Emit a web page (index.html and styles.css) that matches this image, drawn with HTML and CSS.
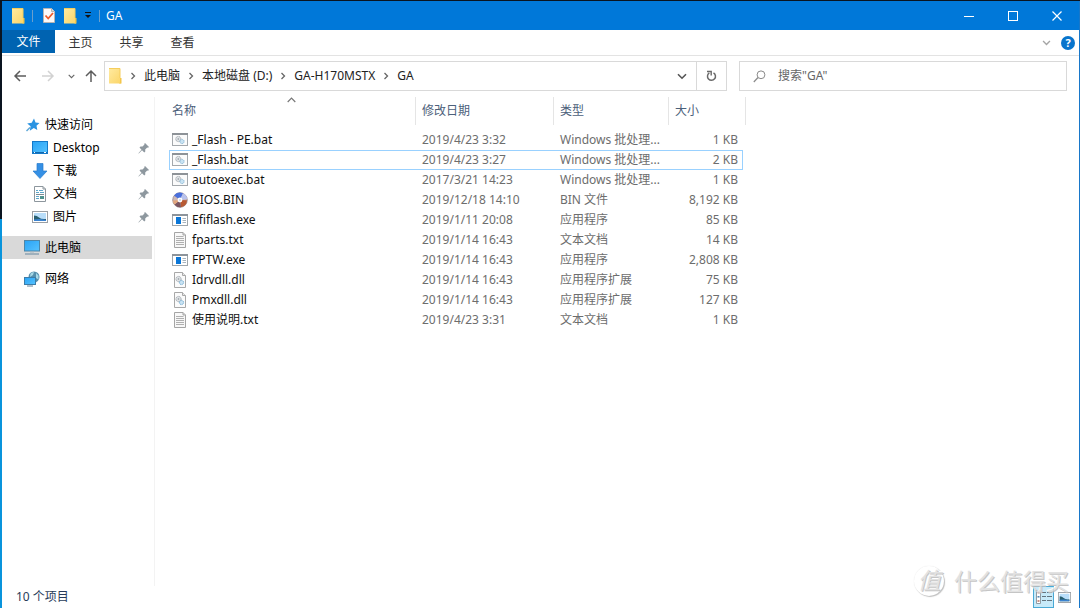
FILE: index.html
```html
<!DOCTYPE html>
<html lang="zh-CN">
<head>
<meta charset="utf-8">
<title>GA</title>
<link rel="stylesheet" href="styles.css">
</head>
<body>
<svg class="defs" aria-hidden="true">
  <linearGradient id="gold" x1="0" y1="0" x2="1" y2="1"><stop offset="0" stop-color="#ffeaa0"/><stop offset="1" stop-color="#fbd567"/></linearGradient>
  <linearGradient id="sky" x1="0" y1="0" x2="1" y2="1"><stop offset="0" stop-color="#29a3f5"/><stop offset="1" stop-color="#56c3ff"/></linearGradient>
  <symbol id="folder" viewBox="0 0 14 16"><path d="M1 .5h11v11.5h1v3.5H1z" fill="url(#gold)"/><path d="M1 15.5h10l1-1V10h1.5v5.5z" fill="#f3c64b"/><path d="M1 .5h11V10" fill="none" stroke="#f5cd5c"/></symbol>
  <symbol id="chev-r" viewBox="0 0 6 8"><path d="M1.500 1l3 3-3 3" fill="none" stroke="#666" stroke-width="1.300"/></symbol>
  <symbol id="chev-d" viewBox="0 0 10 7"><path d="M1 1.200l4 4 4-4" fill="none" stroke="currentColor" stroke-width="1.600"/></symbol>
  <symbol id="pin" viewBox="0 0 12 12"><path d="M7 1l4 4-1 .8-.8-.2-2 2 .1 2-1 1L4 8.300.8 11.500l-.4-.3L3.500 7.800 1.500 5.500l1-1 2 .1 2-2L6.200 2z" fill="#8e989f"/></symbol>
  <symbol id="bat" viewBox="0 0 16 14"><rect x=".5" y=".5" width="15" height="12" fill="#fbfbfb" stroke="#a4a8ac"/><path d="M0 1h16" stroke="#8d9297" stroke-width="2"/><circle cx="6.300" cy="6" r="2.600" fill="#dfe3e6" stroke="#a1a7ad" stroke-dasharray="1.300 .5"/><circle cx="6.300" cy="6" r=".8" fill="#8c949b"/><circle cx="10" cy="8.500" r="2.100" fill="#c9e3f3" stroke="#87b8d6" stroke-dasharray="1.200 .5"/></symbol>
  <symbol id="exe" viewBox="0 0 16 14"><rect x=".5" y="1.500" width="15" height="11" fill="#fff" stroke="#a0a6ab"/><path d="M0 2h16" stroke="#8d949b" stroke-width="2"/><rect x="4" y="4" width="5" height="7" fill="#0a76d8"/><path d="M10.500 5.500H14M10.500 7.500H14M10.500 9.500H14" stroke="#a8b4bf"/></symbol>
  <symbol id="txt" viewBox="0 0 14 16"><path d="M1.500.5H10L12.500 3v12.500h-11z" fill="#f8f8f8" stroke="#a5a5a5"/><path d="M10 .5V3h2.500" fill="#ddd" stroke="#a5a5a5"/><path d="M3 4.500h7.500M3 6.500h8M3 8.500h8M3 10.500h8M3 12.500h8" stroke="#b0b0b0"/></symbol>
  <symbol id="dll" viewBox="0 0 14 16"><path d="M1.500.5H9.500L12.500 3.500v12h-11z" fill="#fbfbfb" stroke="#a8a8a8"/><path d="M9.500.5v3h3" fill="#e8e8e8" stroke="#a8a8a8"/><circle cx="5.500" cy="7" r="2.600" fill="#dfe3e6" stroke="#a1a7ad" stroke-dasharray="1.300 .5"/><circle cx="5.500" cy="7" r=".8" fill="#8c949b"/><circle cx="8.500" cy="10.500" r="2.100" fill="#c9e3f3" stroke="#72acd2" stroke-dasharray="1.200 .5"/></symbol>
  <symbol id="disc" viewBox="0 0 16 16"><circle cx="8" cy="8" r="7.300" fill="#cdb8b8" stroke="#8b7b80" stroke-width=".7"/><path d="M8 8L2 3.500A7.300 7.300 0 0 1 11 1.300z" fill="#4a70dc"/><path d="M8 8l3-6.700A7.300 7.300 0 0 1 15.200 7z" fill="#b9c3ee"/><path d="M8 8l7 .3A7.300 7.300 0 0 1 9 15.200z" fill="#b85a34"/><path d="M8 8l1 7.200A7.300 7.300 0 0 1 2.500 12.500z" fill="#7a5560"/><path d="M8 8l-5.500 4.500A7.300 7.300 0 0 1 .8 8.500z" fill="#e3a77d"/><circle cx="8" cy="8" r="2.400" fill="#fff"/><circle cx="8" cy="8" r="1.100" fill="#cfd6ea"/></symbol>
  <symbol id="picture" viewBox="0 0 16 12"><rect x=".5" y=".5" width="15" height="11" fill="#fff" stroke="#9a9fa4"/><path d="M2 2h12v8H2z" fill="#b9defa"/><path d="M2 4.500q3 0 5 2t7 1.500v2H2z" fill="#285f70"/><path d="M2 8.500q6-1 12 .5v1H2z" fill="#3b83d0"/></symbol>
</svg>
<div class="window">
  <header class="titlebar">
    <svg width="14" height="16"><use href="#folder"/></svg>
    <span class="bar"></span>
    <button class="quick" aria-label="属性"><svg width="12" height="15" viewBox="0 0 12 15"><path d="M.5.5h8l3 3v11H.5z" fill="#fbf9f8" stroke="#b7b4b4"/><path d="M8.500.5v3h3" fill="#ddd" stroke="#b7b4b4"/><path d="M2.500 7.500l2.700 3L10 5" fill="none" stroke="#ed5a2a" stroke-width="1.800"/></svg></button>
    <button class="quick" aria-label="新建文件夹"><svg width="14" height="16"><use href="#folder"/></svg></button>
    <button class="quick customize" aria-label="自定义快速访问工具栏"><svg width="8" height="7" viewBox="0 0 8 7"><path d="M1 .5h6" stroke="#111"/><path d="M1 3h6L4 6z" fill="#111"/></svg></button>
    <span class="bar"></span>
    <h1 class="title">GA</h1>
    <div class="controls">
      <button aria-label="最小化"><svg width="10" height="10"><path d="M0 5.500h10" stroke="#fff"/></svg></button>
      <button aria-label="最大化"><svg width="10" height="10"><rect x=".5" y=".5" width="9" height="9" fill="none" stroke="#fff"/></svg></button>
      <button aria-label="关闭"><svg width="10" height="10"><path d="M.5.5l9 9M9.500.5l-9 9" stroke="#fff" stroke-width="1.200"/></svg></button>
    </div>
  </header>
  <nav class="ribbon">
    <button class="tab file">文件</button>
    <button class="tab">主页</button>
    <button class="tab">共享</button>
    <button class="tab">查看</button>
    <div class="ribbon-end">
      <button class="plain faint" aria-label="展开功能区"><svg width="9" height="6"><use href="#chev-d"/></svg></button>
      <button class="help" aria-label="帮助">?</button>
    </div>
  </nav>
  <div class="navrow">
    <div class="arrows">
      <button class="plain" aria-label="后退"><svg width="12" height="12" viewBox="0 0 12 12"><path d="M12 6H1.500M6 1L1 6l5 5" fill="none" stroke="#5c5c5c" stroke-width="1.500"/></svg></button>
      <button class="plain" aria-label="前进"><svg width="12" height="12" viewBox="0 0 12 12"><path d="M0 6h10.500M6 1l5 5-5 5" fill="none" stroke="#d2d2d2" stroke-width="1.500"/></svg></button>
      <button class="plain recent" aria-label="最近位置"><svg width="7" height="5"><use href="#chev-d"/></svg></button>
      <button class="plain" aria-label="上移"><svg width="12" height="12" viewBox="0 0 12 12"><path d="M6 12V1.500M1 6l5-5 5 5" fill="none" stroke="#5c5c5c" stroke-width="1.500"/></svg></button>
    </div>
    <div class="address">
      <svg width="14" height="16"><use href="#folder"/></svg>
      <svg class="sep" width="6" height="8"><use href="#chev-r"/></svg>
      <a href="#">此电脑</a>
      <svg class="sep" width="6" height="8"><use href="#chev-r"/></svg>
      <a href="#">本地磁盘 (D:)</a>
      <svg class="sep" width="6" height="8"><use href="#chev-r"/></svg>
      <a href="#">GA-H170MSTX</a>
      <svg class="sep" width="6" height="8"><use href="#chev-r"/></svg>
      <a href="#">GA</a>
      <button class="plain history" aria-label="以前的位置"><svg width="10" height="7"><use href="#chev-d"/></svg></button>
      <button class="plain refresh" aria-label="刷新"><svg width="11" height="12" viewBox="0 0 11 12"><path d="M7.500 2.800a4 4 0 1 1-4.200.1" fill="none" stroke="#6a6a6a" stroke-width="1.500"/><path d="M1 1.500h4.200v4" fill="none" stroke="#6a6a6a" stroke-width="1.400"/></svg></button>
    </div>
    <label class="search">
      <svg width="13" height="13" viewBox="0 0 13 13"><circle cx="8" cy="4.800" r="3.900" fill="none" stroke="#8a8a8a"/><path d="M5 7.500L.8 12" stroke="#8a8a8a" stroke-width="1.200"/></svg>
      <input type="text" placeholder="搜索&quot;GA&quot;" aria-label="搜索">
    </label>
  </div>
  <div class="main">
    <aside class="sidebar">
      <a class="place root" href="#"><svg width="14" height="14" viewBox="0 0 14 14"><path d="M8 .5l1.500 4 4 .4-3 2.800.8 4.300-3.500-2-4 2.800.8-4.600L1.200 5.500l4.500-.8z" fill="#2a93e2"/><path d="M4 9.500L.5 13" stroke="#5ca7d8" stroke-width="1.500"/></svg><span>快速访问</span></a>
      <a class="place" href="#"><svg width="16" height="13" viewBox="0 0 16 13"><rect x=".5" y=".5" width="15" height="12" fill="url(#sky)" stroke="#1479c9"/><path d="M1 11.500h14" stroke="#1268ad"/><path d="M2 11.500h1M12 11.500h2" stroke="#fff"/></svg><span>Desktop</span><svg class="pin" width="12" height="12"><use href="#pin"/></svg></a>
      <a class="place" href="#"><svg width="16" height="16" viewBox="0 0 16 16"><path d="M5 .5h6V8h4l-7 7.500L1 8h4z" fill="#3590e5" stroke="#2a7ccc" stroke-width=".7"/></svg><span>下载</span><svg class="pin" width="12" height="12"><use href="#pin"/></svg></a>
      <a class="place" href="#"><svg width="16" height="16" viewBox="0 0 16 16"><path d="M2.500.5H11L13.500 3v12.500h-11z" fill="#fff" stroke="#8d969d"/><path d="M11 .5V3h2.500" fill="none" stroke="#8d969d"/><path d="M4 4.500h2M7 4.500h4M4 6.500h3M8 6.500h4M4 12.500h3M4 10.500h3" stroke="#5da7cb"/><path d="M4 8.500h8" stroke="#7e8b93"/><rect x="8" y="10" width="4" height="3" fill="#4e938e"/></svg><span>文档</span><svg class="pin" width="12" height="12"><use href="#pin"/></svg></a>
      <a class="place" href="#"><svg width="16" height="12"><use href="#picture"/></svg><span>图片</span><svg class="pin" width="12" height="12"><use href="#pin"/></svg></a>
      <a class="place root current" href="#"><svg width="16" height="15" viewBox="0 0 16 15"><rect x=".5" y=".5" width="15" height="10.500" fill="url(#sky)" stroke="#4d86a8"/><path d="M1 14h14" stroke="#7895a8" stroke-width="1.200"/><path d="M6 12h4" stroke="#a5b5bf"/></svg><span>此电脑</span></a>
      <a class="place root" href="#"><svg width="16" height="16" viewBox="0 0 16 16"><circle cx="10" cy="6" r="5.500" fill="#558fac"/><path d="M6.500 2.500Q8 1 10 1l-1 3-3 2zM12 2l2.500 2.500v4L12 7z" fill="#a7d8e7"/><rect x=".5" y="6.500" width="11" height="7" fill="url(#sky)" stroke="#3c7da9"/><path d="M3 15h6" stroke="#648398"/></svg><span>网络</span></a>
    </aside>
    <section class="files">
      <table>
        <colgroup><col class="c-name"><col class="c-date"><col class="c-type"><col class="c-size"></colgroup>
        <thead><tr>
          <th><div>名称<svg class="sort" width="9" height="6" viewBox="0 0 9 6"><path d="M.7 5l3.800-3.800L8.300 5" fill="none" stroke="#777" stroke-width="1.200"/></svg></div></th>
          <th><div>修改日期</div></th><th><div>类型</div></th><th><div class="last">大小</div></th>
        </tr></thead>
        <tbody>
          <tr><td><span class="file-name"><svg width="16" height="14"><use href="#bat"/></svg>_Flash - PE.bat</span></td><td>2019/4/23 3:32</td><td>Windows 批处理...</td><td>1 KB</td></tr>
          <tr class="focused"><td><span class="file-name"><svg width="16" height="14"><use href="#bat"/></svg>_Flash.bat</span></td><td>2019/4/23 3:27</td><td>Windows 批处理...</td><td>2 KB</td></tr>
          <tr><td><span class="file-name"><svg width="16" height="14"><use href="#bat"/></svg>autoexec.bat</span></td><td>2017/3/21 14:23</td><td>Windows 批处理...</td><td>1 KB</td></tr>
          <tr><td><span class="file-name"><svg width="16" height="16"><use href="#disc"/></svg>BIOS.BIN</span></td><td>2019/12/18 14:10</td><td>BIN 文件</td><td>8,192 KB</td></tr>
          <tr><td><span class="file-name"><svg width="16" height="14"><use href="#exe"/></svg>Efiflash.exe</span></td><td>2019/1/11 20:08</td><td>应用程序</td><td>85 KB</td></tr>
          <tr><td><span class="file-name"><svg width="16" height="16"><use href="#txt"/></svg>fparts.txt</span></td><td>2019/1/14 16:43</td><td>文本文档</td><td>14 KB</td></tr>
          <tr><td><span class="file-name"><svg width="16" height="14"><use href="#exe"/></svg>FPTW.exe</span></td><td>2019/1/14 16:43</td><td>应用程序</td><td>2,808 KB</td></tr>
          <tr><td><span class="file-name"><svg width="16" height="16"><use href="#dll"/></svg>Idrvdll.dll</span></td><td>2019/1/14 16:43</td><td>应用程序扩展</td><td>75 KB</td></tr>
          <tr><td><span class="file-name"><svg width="16" height="16"><use href="#dll"/></svg>Pmxdll.dll</span></td><td>2019/1/14 16:43</td><td>应用程序扩展</td><td>127 KB</td></tr>
          <tr><td><span class="file-name"><svg width="16" height="16"><use href="#txt"/></svg>使用说明.txt</span></td><td>2019/4/23 3:31</td><td>文本文档</td><td>1 KB</td></tr>
        </tbody>
      </table>
    </section>
  </div>
  <footer class="status">
    <span>10 个项目</span>
    <div class="views">
      <button class="view active" aria-label="详细信息"><svg width="16" height="14" viewBox="0 0 16 14"><path d="M.5.5h4v13h-4z" fill="#fff" stroke="#8f9ba3"/><path d="M1.500 2.500h2M1.500 11h2" stroke="#b56d5b" stroke-width="1.500"/><path d="M1.500 6.800h2" stroke="#477fae" stroke-width="1.500"/><path d="M6 2.500h4M11 2.500h5M6 6.500h4M11 6.500h5M6 10.500h4M11 10.500h5" stroke="#64747e"/></svg></button>
      <button class="view" aria-label="大缩略图"><svg width="13" height="11" viewBox="0 0 16 12" preserveAspectRatio="none"><use href="#picture"/></svg></button>
    </div>
  </footer>
</div>
<div class="watermark"><span class="seal">值</span><span>什么值得买</span></div>
</body>
</html>
```
FILE: styles.css
```css
* { box-sizing: border-box; }
body {
  margin: 0;
  min-height: 100vh;
  padding: 1px 1px 0 2px;
  display: flex;
  position: relative;
  overflow: hidden;
  background: linear-gradient(#0a1420 0 36%, #0994dc 36%);
  color: #000;
  font: 12px/20px "Noto Sans", "Noto Sans CJK SC", sans-serif;
}
svg { display: block; flex: none; overflow: visible; }
.defs { position: absolute; width: 0; height: 0; }
button { border: 0; padding: 0; background: none; font: inherit; color: inherit; }
a { color: inherit; text-decoration: none; }
.window { flex: 1; min-width: 0; display: flex; flex-direction: column; background: #fff; box-shadow: 1px 0 #1877c9; }

.titlebar { height: 29px; display: flex; align-items: center; padding-left: 9px; background: #0078d9; color: #fff; }
.bar { width: 1px; height: 12px; background: #6a9fcc; margin: 0 10px 0 7px; }
.quick { margin-right: 8px; }
.customize { margin: 0 0 0 -1px; }
.customize + .bar { margin-right: 6px; }
.title { margin: 0; font-size: 12px; font-weight: 400; }
.controls { margin-left: auto; display: flex; align-self: stretch; }
.controls button { width: 44px; display: flex; align-items: center; justify-content: center; }

.ribbon { height: 26px; display: flex; border-bottom: 1px solid #e3e3e3; color: #333; }
.tab { width: 51px; }
.file { width: 53px; height: 23px; background: #0063b1; color: #fff; }
.ribbon-end { margin-left: auto; display: flex; align-items: center; gap: 10px; padding-right: 4px; }
.faint { color: #a5a5a5; }
.help { width: 14px; height: 14px; border-radius: 50%; background: #0874cc; color: #fff; font-size: 11px; font-weight: 700; line-height: 14px; }

.navrow { display: flex; gap: 12px; padding: 5px 12px 6px; color: #222; }
.plain { display: flex; align-items: center; justify-content: center; }
.arrows { display: flex; align-items: center; gap: 16px; width: 78px; }
.arrows .recent { margin: 0 -6px 0 -2px; color: #666; }
.address { flex: 1; height: 30px; display: flex; align-items: center; border: 1px solid #d9d9d9; padding-left: 3px; white-space: nowrap; }
.sep { margin: 0 8px; }
.history { width: 28px; height: 28px; margin-left: auto; color: #555; }
.refresh { width: 30px; height: 28px; border-left: 1px solid #d9d9d9; }
.search { flex: 0 0 328px; height: 30px; border: 1px solid #d9d9d9; display: flex; align-items: center; gap: 12px; padding-left: 13px; }
.search input { flex: 1; min-width: 0; border: 0; outline: 0; padding: 0; font: inherit; background: none; }
.search input::placeholder { color: #666; opacity: 1; }

.main { flex: 1; display: flex; }
.sidebar { width: 153px; padding-top: 16px; border-right: 1px solid #f3f3f3; }
.place { height: 23px; display: flex; align-items: center; gap: 5px; padding: 0 2px 0 30px; margin-right: 2px; }
.root { padding-left: 22px; margin-bottom: 8px; }
.root:first-child { margin-bottom: 0; padding-left: 24px; }
.current { margin-top: 8px; background: #d9d9d9; }
.pin { margin-left: auto; }

.files { flex: 1; padding-left: 14px; }
table { width: 574px; table-layout: fixed; border-spacing: 0; color: #6d6d6d; }
.c-name { width: 247px; }
.c-date { width: 138px; }
.c-type { width: 115px; }
th { padding: 0 0 5px; text-align: left; font-weight: 400; color: #4c607a; }
th div { height: 28px; line-height: 28px; padding-left: 6px; border-right: 1px solid #e5e5e5; position: relative; }
th:first-child div { padding-left: 3px; }
th .last { margin-right: -3px; }
.sort { position: absolute; left: 118px; top: 0; }
td { height: 20px; padding: 0 0 0 6px; line-height: 18px; white-space: nowrap; border: solid transparent; border-width: 1px 0; }
td:first-child { padding-left: 3px; color: #111; }
td:last-child { padding: 0 5px 0 0; text-align: right; }
.focused td { border-color: #99d1ff; }
.focused td:first-child { border-left: 1px solid #99d1ff; padding-left: 2px; }
.focused td:last-child { border-right: 1px solid #99d1ff; padding-right: 4px; }
.file-name { display: flex; align-items: center; gap: 4px; height: 18px; }

.status { height: 22px; display: flex; align-items: center; justify-content: space-between; padding-left: 14px; color: #283c5a; }
.views { display: flex; height: 22px; padding-right: 4px; }
.view { width: 21px; display: flex; align-items: center; justify-content: center; }
.active { background: #c7eaf9; border: 1px solid #49a9d5; }

.watermark { position: absolute; right: 11px; bottom: 11px; display: flex; align-items: center; gap: 10px; color: #dedede; font-size: 23px; line-height: 32px; text-shadow: 1px 1px #bcbcbc, -1px -1px #fff; opacity: 0.85; pointer-events: none; }
.seal { width: 30px; height: 30px; line-height: 28px; border-radius: 50%; text-align: center; font-style: italic; box-shadow: 1px 1px 1px #b5b5b5, 0 0 1px #ddd; }
```
